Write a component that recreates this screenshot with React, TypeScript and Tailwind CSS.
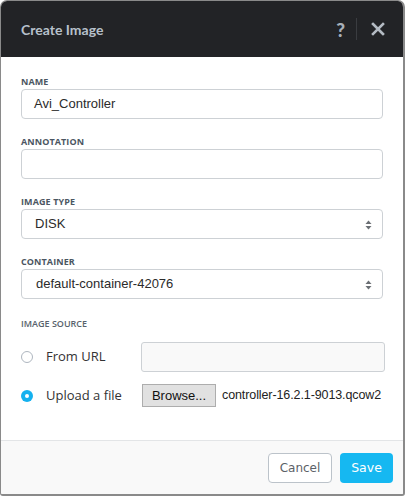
import React from "react";

const labelCls =
  "h-3 text-[9px] leading-3 font-bold uppercase text-[#4b5662] tracking-[0.1px]";

const inputFont = { fontFamily: "'Liberation Sans', Arial, sans-serif" };

function Field({ label, children }: { label: string; children: React.ReactNode }) {
  return (
    <div className="flex flex-col">
      <div className={labelCls}>{label}</div>
      <div className="mt-[1px]">{children}</div>
    </div>
  );
}

function Arrows() {
  return (
    <svg width="7" height="10" viewBox="0 0 7 10" className="absolute right-[10px] top-[10px]">
      <path d="M3.5 0.5 L6.5 4 L0.5 4 Z" fill="#6b6f74" />
      <path d="M3.5 9.5 L6.5 6 L0.5 6 Z" fill="#6b6f74" />
    </svg>
  );
}

export default function App() {
  return (
    <div className="w-[406px] h-[498px] bg-white" style={{ fontFamily: "'Open Sans', 'Noto Sans', sans-serif" }}>
      <div className="w-[405px] h-[496px] border-l border-t border-r-2 border-b-2 border-[#8a8a8a] rounded-t-[7px] rounded-b-[3px] overflow-hidden flex flex-col bg-white">
        <div className="h-[56px] bg-[#222326] flex items-center pl-[20px] pr-[18px] shrink-0">
          <div
            className="text-[14px] font-bold text-[#b7c0cb] flex-1"
            style={{ fontFamily: "Lato, 'Open Sans', sans-serif" }}
          >
            Create Image
          </div>
          <div
            className="text-[19px] font-black text-[#a7afb8] mr-[11px] leading-none"
            style={{ fontFamily: "Lato, sans-serif" }}
          >
            ?
          </div>
          <div className="w-px h-[22px] bg-[#3a3c40] mr-[14px]" />
          <svg width="14" height="14" viewBox="0 0 14 14">
            <path d="M2 2 L12 12 M12 2 L2 12" stroke="#b3bac2" strokeWidth="2.6" strokeLinecap="square" />
          </svg>
        </div>

        <div className="flex-1 flex flex-col px-[20px] pt-[19px] gap-[17px]">
          <Field label="Name">
            <div
              className="h-[30px] border border-[#cdd1d5] rounded-[4px] flex items-center pl-[12px] text-[13px] text-[#2b2b2b]"
              style={inputFont}
            >
              Avi_Controller
            </div>
          </Field>
          <Field label="Annotation">
            <div className="h-[30px] border border-[#cdd1d5] rounded-[4px]" />
          </Field>
          <Field label="Image Type">
            <div
              className="relative h-[30px] border border-[#cdd1d5] rounded-[4px] flex items-center pl-[13px] text-[13px] text-[#2b2b2b]"
              style={inputFont}
            >
              DISK
              <Arrows />
            </div>
          </Field>
          <Field label="Container">
            <div
              className="relative h-[30px] border border-[#cdd1d5] rounded-[4px] flex items-center pl-[14px] text-[13px] text-[#2b2b2b]"
              style={inputFont}
            >
              default-container-42076
              <Arrows />
            </div>
          </Field>

          <div className="flex flex-col mt-[2px]">
            <div className="h-3 text-[9px] leading-3 font-semibold uppercase text-[#58626c]">Image Source</div>
            <div className="flex items-center mt-[12px] h-[30px]">
              <div className="shrink-0 w-[12px] h-[12px] rounded-full border border-[#aeb6bf] bg-white" />
              <div className="shrink-0 ml-[13px] w-[95px] text-[13px] text-[#333]">From URL</div>
              <div className="flex-1 h-[30px] border border-[#cdd1d5] bg-[#f9f9f9] rounded-[3px] -mr-[2px]" />
            </div>
            <div className="flex items-center mt-[12px] h-[23px]">
              <div className="shrink-0 w-[12px] h-[12px] rounded-full bg-[#15b1ef] flex items-center justify-center">
                <div className="w-[4px] h-[4px] rounded-full bg-white" />
              </div>
              <div className="shrink-0 ml-[13px] w-[96px] text-[13px] text-[#333] whitespace-nowrap">Upload a file</div>
              <div
                className="shrink-0 h-[23px] w-[74px] border border-[#adadad] bg-[#e1e1e1] flex items-center justify-center text-[13px] text-[#111]"
                style={inputFont}
              >
                Browse...
              </div>
              <div className="ml-[6px] text-[12.5px] tracking-[-0.1px] text-[#222] whitespace-nowrap" style={inputFont}>
                controller-16.2.1-9013.qcow2
              </div>
            </div>
          </div>
        </div>

        <div className="h-[54px] shrink-0 border-t border-[#e3e5e7] bg-[#f9f9f9] flex items-start justify-end pt-[12px] pr-[10px] gap-[8px]">
          <div
            className="h-[30px] w-[64px] border border-[#bcc3ca] rounded-[4px] bg-white flex items-center justify-center text-[12px] text-[#5b6167]"
            style={{ fontFamily: "'DejaVu Sans', sans-serif" }}
          >
            Cancel
          </div>
          <div
            className="h-[30px] w-[53px] rounded-[4px] bg-[#16b8f1] flex items-center justify-center text-[12.5px] text-white"
            style={{ fontFamily: "'DejaVu Sans', sans-serif" }}
          >
            Save
          </div>
        </div>
      </div>
    </div>
  );
}
